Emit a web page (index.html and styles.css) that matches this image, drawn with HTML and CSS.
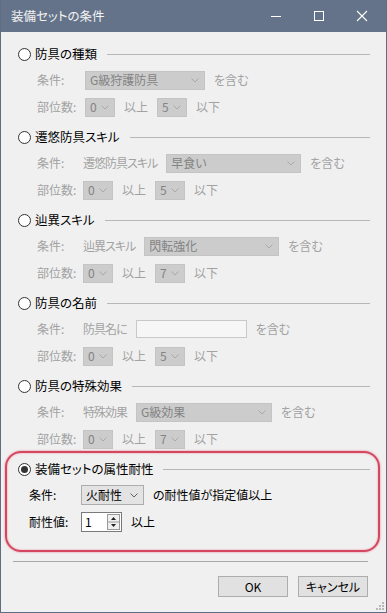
FILE: index.html
```html
<!DOCTYPE html>
<html lang="ja">
<head>
  <meta charset="UTF-8">
  <title>装備セットの条件</title>
  <link rel="stylesheet" href="styles.css">
</head>
<body>

  <div class="window">

    <!-- タイトルバー -->
    <div class="titlebar">
      <span class="title">装備セットの条件</span>
      <div class="controls">
        <svg width="12" height="12" viewBox="0 0 12 12"><path d="M1 6.5h10" stroke="#fff" stroke-width="1"/></svg>
        <svg width="12" height="12" viewBox="0 0 12 12"><rect x="1.5" y="1.5" width="9" height="9" fill="none" stroke="#fff" stroke-width="1"/></svg>
        <svg width="12" height="12" viewBox="0 0 12 12"><path d="M1 1l10 10M11 1L1 11" stroke="#fff" stroke-width="1.1"/></svg>
      </div>
    </div>

    <div class="content">

      <!-- 防具の種類 -->
      <div class="group">
        <div class="group-head">
          <span class="radio"></span>
          <span class="group-name">防具の種類</span>
          <span class="rule"></span>
        </div>
        <div class="group-rows">
          <div class="row">
            <span class="row-label">条件:</span>
            <div class="combo disabled first" style="width: 120px"><span>G級狩護防具</span><svg width="8" height="5" viewBox="0 0 8 5"><path d="M0.5 0.5l3.5 3.5 3.5-3.5" fill="none" stroke="#a9a9a9"/></svg></div>
            <span>を含む</span>
          </div>
          <div class="row">
            <span class="row-label">部位数:</span>
            <div class="combo disabled small first"><span>0</span><svg width="8" height="5" viewBox="0 0 8 5"><path d="M0.5 0.5l3.5 3.5 3.5-3.5" fill="none" stroke="#a9a9a9"/></svg></div>
            <span>以上</span>
            <div class="combo disabled small"><span>5</span><svg width="8" height="5" viewBox="0 0 8 5"><path d="M0.5 0.5l3.5 3.5 3.5-3.5" fill="none" stroke="#a9a9a9"/></svg></div>
            <span>以下</span>
          </div>
        </div>
      </div>

      <!-- 遷悠防具スキル -->
      <div class="group">
        <div class="group-head">
          <span class="radio"></span>
          <span class="group-name">遷悠防具スキル</span>
          <span class="rule"></span>
        </div>
        <div class="group-rows">
          <div class="row">
            <span class="row-label">条件:</span>
            <span class="sub-label">遷悠防具スキル</span>
            <div class="combo disabled" style="width: 135px"><span>早食い</span><svg width="8" height="5" viewBox="0 0 8 5"><path d="M0.5 0.5l3.5 3.5 3.5-3.5" fill="none" stroke="#a9a9a9"/></svg></div>
            <span>を含む</span>
          </div>
          <div class="row">
            <span class="row-label">部位数:</span>
            <div class="combo disabled small"><span>0</span><svg width="8" height="5" viewBox="0 0 8 5"><path d="M0.5 0.5l3.5 3.5 3.5-3.5" fill="none" stroke="#a9a9a9"/></svg></div>
            <span>以上</span>
            <div class="combo disabled small"><span>5</span><svg width="8" height="5" viewBox="0 0 8 5"><path d="M0.5 0.5l3.5 3.5 3.5-3.5" fill="none" stroke="#a9a9a9"/></svg></div>
            <span>以下</span>
          </div>
        </div>
      </div>

      <!-- 辿異スキル -->
      <div class="group">
        <div class="group-head">
          <span class="radio"></span>
          <span class="group-name">辿異スキル</span>
          <span class="rule"></span>
        </div>
        <div class="group-rows">
          <div class="row">
            <span class="row-label">条件:</span>
            <span class="sub-label">辿異スキル</span>
            <div class="combo disabled" style="width: 135px"><span>閃転強化</span><svg width="8" height="5" viewBox="0 0 8 5"><path d="M0.5 0.5l3.5 3.5 3.5-3.5" fill="none" stroke="#a9a9a9"/></svg></div>
            <span>を含む</span>
          </div>
          <div class="row">
            <span class="row-label">部位数:</span>
            <div class="combo disabled small"><span>0</span><svg width="8" height="5" viewBox="0 0 8 5"><path d="M0.5 0.5l3.5 3.5 3.5-3.5" fill="none" stroke="#a9a9a9"/></svg></div>
            <span>以上</span>
            <div class="combo disabled small"><span>7</span><svg width="8" height="5" viewBox="0 0 8 5"><path d="M0.5 0.5l3.5 3.5 3.5-3.5" fill="none" stroke="#a9a9a9"/></svg></div>
            <span>以下</span>
          </div>
        </div>
      </div>

      <!-- 防具の名前 -->
      <div class="group">
        <div class="group-head">
          <span class="radio"></span>
          <span class="group-name">防具の名前</span>
          <span class="rule"></span>
        </div>
        <div class="group-rows">
          <div class="row">
            <span class="row-label">条件:</span>
            <span class="sub-label">防具名に</span>
            <div class="textbox disabled"></div>
            <span>を含む</span>
          </div>
          <div class="row">
            <span class="row-label">部位数:</span>
            <div class="combo disabled small"><span>0</span><svg width="8" height="5" viewBox="0 0 8 5"><path d="M0.5 0.5l3.5 3.5 3.5-3.5" fill="none" stroke="#a9a9a9"/></svg></div>
            <span>以上</span>
            <div class="combo disabled small"><span>5</span><svg width="8" height="5" viewBox="0 0 8 5"><path d="M0.5 0.5l3.5 3.5 3.5-3.5" fill="none" stroke="#a9a9a9"/></svg></div>
            <span>以下</span>
          </div>
        </div>
      </div>

      <!-- 防具の特殊効果 -->
      <div class="group">
        <div class="group-head">
          <span class="radio"></span>
          <span class="group-name">防具の特殊効果</span>
          <span class="rule"></span>
        </div>
        <div class="group-rows">
          <div class="row">
            <span class="row-label">条件:</span>
            <span class="sub-label">特殊効果</span>
            <div class="combo disabled" style="width: 136px"><span>G級効果</span><svg width="8" height="5" viewBox="0 0 8 5"><path d="M0.5 0.5l3.5 3.5 3.5-3.5" fill="none" stroke="#a9a9a9"/></svg></div>
            <span>を含む</span>
          </div>
          <div class="row">
            <span class="row-label">部位数:</span>
            <div class="combo disabled small"><span>0</span><svg width="8" height="5" viewBox="0 0 8 5"><path d="M0.5 0.5l3.5 3.5 3.5-3.5" fill="none" stroke="#a9a9a9"/></svg></div>
            <span>以上</span>
            <div class="combo disabled small"><span>7</span><svg width="8" height="5" viewBox="0 0 8 5"><path d="M0.5 0.5l3.5 3.5 3.5-3.5" fill="none" stroke="#a9a9a9"/></svg></div>
            <span>以下</span>
          </div>
        </div>
      </div>

      <!-- 装備セットの属性耐性 (選択中) -->
      <div class="group active">
        <div class="group-head">
          <span class="radio checked"></span>
          <span class="group-name">装備セットの属性耐性</span>
          <span class="rule"></span>
        </div>
        <div class="group-rows">
          <div class="row">
            <span class="row-label">条件:</span>
            <div class="combo" style="width: 63px"><span>火耐性</span><svg width="8" height="5" viewBox="0 0 8 5"><path d="M0.5 0.5l3.5 3.5 3.5-3.5" fill="none" stroke="#606060"/></svg></div>
            <span>の耐性値が指定値以上</span>
          </div>
          <div class="row">
            <span class="row-label">耐性値:</span>
            <div class="spinner">
              <span>1</span>
              <div class="spin-buttons">
                <svg width="13" height="16" viewBox="0 0 13 16">
                  <rect x="0.5" y="0.5" width="12" height="15" fill="#f0f0f0" stroke="#9a9a9a"/>
                  <path d="M0.5 8h12" stroke="#9a9a9a"/>
                  <path d="M4 6l2.5-3 2.5 3z" fill="#222"/>
                  <path d="M4 10l2.5 3 2.5-3z" fill="#222"/>
                </svg>
              </div>
            </div>
            <span>以上</span>
          </div>
        </div>
      </div>

    </div>

    <!-- ボタン -->
    <div class="footer">
      <div class="separator"></div>
      <div class="buttons">
        <div class="button">OK</div>
        <div class="button">キャンセル</div>
      </div>
      <svg class="grip" width="8" height="8" viewBox="0 0 8 8">
        <rect x="6" y="0" width="2" height="2" fill="#b8b8b8"/>
        <rect x="3" y="3" width="2" height="2" fill="#b8b8b8"/>
        <rect x="6" y="3" width="2" height="2" fill="#b8b8b8"/>
        <rect x="0" y="6" width="2" height="2" fill="#b8b8b8"/>
        <rect x="3" y="6" width="2" height="2" fill="#b8b8b8"/>
        <rect x="6" y="6" width="2" height="2" fill="#b8b8b8"/>
      </svg>
    </div>

  </div>

</body>
</html>
```

FILE: styles.css
```css
body {
  margin: 0;
  background-color: #f0f0f0;
  font-family: "Noto Sans CJK JP", "Noto Sans", sans-serif;
  font-size: 12px;
  font-feature-settings: "palt";
  color: #000;
}

.window {
  width: 387px;
  height: 613px;
  box-sizing: border-box;
  border: 1px solid #5f6d82;
  border-top: none;
  background-color: #f0f0f0;
  position: relative;
  display: flex;
  flex-direction: column;
}

/* タイトルバー */
.titlebar {
  height: 32px;
  background-color: #647389;
  display: flex;
  align-items: center;
  padding-left: 10px;
  flex-shrink: 0;
}

.title {
  color: #f4f4f4;
  font-size: 12.5px;
  line-height: 16px;
}

.controls {
  margin-left: auto;
  display: flex;
  align-items: center;
  gap: 31px;
  padding-right: 18px;
}

/* 本体 */
.content {
  padding: 12px 16px 0 16px;
  display: flex;
  flex-direction: column;
  gap: 10px;
}

.group {
  position: relative;
}

.group-head {
  height: 20px;
  display: flex;
  align-items: center;
}

.radio {
  width: 11px;
  height: 11px;
  border: 1px solid #333;
  border-radius: 50%;
  background-color: #fff;
  margin-left: 1px;
  position: relative;
  flex-shrink: 0;
}

.radio.checked::after {
  content: "";
  position: absolute;
  width: 7px;
  height: 7px;
  top: 2px;
  left: 2px;
  border-radius: 50%;
  background-color: #333;
}

.group-name {
  margin-left: 4px;
  font-size: 12.5px;
  line-height: 16px;
}

.rule {
  flex: 1;
  border-top: 1px solid #b7b7b7;
  margin-left: 10px;
}

.group-rows {
  padding: 6px 0 0 20px;
  display: flex;
  flex-direction: column;
  gap: 7px;
  color: #a2a2a2;
}

.row {
  height: 20px;
  display: flex;
  align-items: center;
  gap: 9px;
  line-height: 16px;
  white-space: nowrap;
}

.row-label {
  width: 37px;
}

.sub-label {
  letter-spacing: -1px;
}

/* コンボボックス */
.combo {
  height: 19px;
  box-sizing: border-box;
  border: 1px solid #adadad;
  background-color: #e3e3e3;
  display: flex;
  align-items: center;
  justify-content: space-between;
  padding: 0 5px 0 4px;
  color: #000;
}

.combo.disabled {
  background-color: #cccccc;
  border-color: #c4c4c4;
  color: #838383;
}

.combo.small {
  width: 30px;
}

.combo.first {
  margin-left: 2px;
}

.textbox {
  width: 111px;
  height: 18px;
  box-sizing: border-box;
  border: 1px solid #c9c9c9;
  background-color: #f6f6f6;
}

/* 選択中のグループ */
.group.active::before {
  content: "";
  position: absolute;
  top: -8px;
  left: -12px;
  right: -10px;
  bottom: -20px;
  border: 2px solid #d4475f;
  border-radius: 16px;
  box-shadow: 0 0 2px #e06a80, inset 0 0 2px #e8899a;
  pointer-events: none;
}

.group.active .group-rows {
  padding-left: 12px;
  color: #000;
}

.group.active .row-label {
  width: 43px;
}

.group.active .combo {
  height: 20px;
}

.spinner {
  width: 41px;
  height: 20px;
  box-sizing: border-box;
  border: 1px solid #7a7a7a;
  background-color: #fff;
  display: flex;
  align-items: center;
  justify-content: space-between;
  padding: 0 1px 0 3px;
  color: #000;
}

.spin-buttons {
  display: flex;
}

/* ボタン */
.footer {
  margin-top: auto;
  padding: 0 18px 15px 12px;
  position: relative;
}

.separator {
  border-top: 1px solid #a8a8a8;
}

.buttons {
  margin-top: 14px;
  display: flex;
  justify-content: flex-end;
  gap: 10px;
}

.button {
  width: 70px;
  height: 21px;
  box-sizing: border-box;
  border: 1px solid #adadad;
  background-color: #e1e1e1;
  display: flex;
  align-items: center;
  justify-content: center;
  line-height: 16px;
}

.grip {
  position: absolute;
  right: 2px;
  bottom: 2px;
}
```
